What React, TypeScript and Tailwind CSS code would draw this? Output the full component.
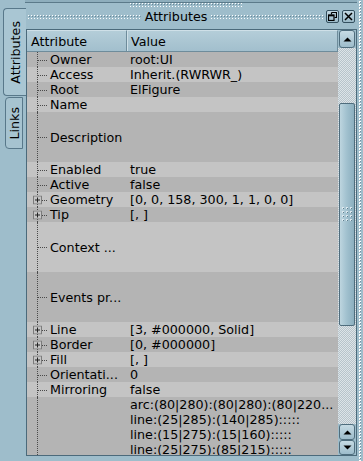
import React from 'react';

type Row = { label: string; value?: string; tall?: boolean; expand?: boolean };

const rows: Row[] = [
  { label: 'Owner', value: 'root:UI' },
  { label: 'Access', value: 'Inherit.(RWRWR_)' },
  { label: 'Root', value: 'ElFigure' },
  { label: 'Name' },
  { label: 'Description', tall: true },
  { label: 'Enabled', value: 'true' },
  { label: 'Active', value: 'false' },
  { label: 'Geometry', value: '[0, 0, 158, 300, 1, 1, 0, 0]', expand: true },
  { label: 'Tip', value: '[, ]', expand: true },
  { label: 'Context ...', tall: true },
  { label: 'Events pr...', tall: true },
  { label: 'Line', value: '[3, #000000, Solid]', expand: true },
  { label: 'Border', value: '[0, #000000]', expand: true },
  { label: 'Fill', value: '[, ]', expand: true },
  { label: 'Orientati...', value: '0' },
  { label: 'Mirroring', value: 'false' },
];

const shapes = [
  'arc:(80|280):(80|280):(80|220...',
  'line:(25|285):(140|285):::::',
  'line:(15|275):(15|160):::::',
  'line:(25|275):(85|215):::::',
];

const Grip = ({ id, className }: { id: string; className: string }) => (
  <div className={className}>
    <svg className="block w-full h-full">
      <defs>
        <pattern id={id} width="3" height="3" patternUnits="userSpaceOnUse">
          <rect x="0" y="0" width="1" height="1" fill="#ffffff" />
          <rect x="1" y="1" width="1" height="1" fill="#6a8898" />
        </pattern>
      </defs>
      <rect width="100%" height="100%" fill={`url(#${id})`} />
    </svg>
  </div>
);

const ExpandBox = () => (
  <svg width="9" height="9" className="absolute left-[6px] top-1/2 -translate-y-1/2">
    <rect x="0.5" y="0.5" width="8" height="8" fill="#c4c4c4" stroke="#7b7b7b" />
    <path d="M2 4.5h5M4.5 2v5" stroke="#222" />
  </svg>
);

const Arrow = ({ down }: { down?: boolean }) => (
  <svg width="9" height="5">
    <path d={down ? 'M0.5 0.5h8l-4 4z' : 'M0.5 4.5h8l-4-4z'} fill="#000" />
  </svg>
);

const ScrollBtn = ({ down, h }: { down?: boolean; h: string }) => (
  <div
    className={`${h} mx-[1px] rounded-[3px] border border-[#4f6d7d] bg-gradient-to-b from-[#c6dbe4] to-[#9dbccb] flex items-center justify-center`}
  >
    <Arrow down={down} />
  </div>
);

const TreeRow = ({ row, dark }: { row: Row; dark: boolean }) => (
  <div className={`flex ${row.tall ? 'h-[50px]' : 'h-[15px]'} ${dark ? 'bg-[#b4b4b4]' : 'bg-[#c4c4c4]'}`}>
    <div className="relative w-[100px] flex items-center pl-[23px] whitespace-nowrap">
      <span className="absolute left-[10px] top-0 bottom-0 border-l border-dotted border-[#4a4a4a]" />
      <span className="absolute left-[11px] w-[9px] top-1/2 border-t border-dotted border-[#4a4a4a]" />
      {row.expand && <ExpandBox />}
      {row.label}
    </div>
    <div className="flex-1 flex items-center pl-[3px] whitespace-nowrap overflow-hidden">{row.value}</div>
  </div>
);

export default function App() {
  return (
    <div className="w-[363px] h-[461px] bg-[#9ebdcb] flex overflow-hidden text-[12.7px] leading-[15px] text-black font-['DejaVu_Sans',sans-serif]">
      <div className="w-[357px] flex flex-col">
        <div className="h-[3px] ml-[25px] bg-[#8eaebd] border-b border-[#5b7a8a]" />
        <div className="h-[5px] flex justify-center pl-[14px]">
          <Grip id="g-top" className="w-[112px] h-[4px]" />
        </div>
        <div className="flex flex-1 min-h-0">
          <div className="w-[26px] flex flex-col items-end">
            <div className="w-[23px] h-[88px] bg-[#a9c6d3] border border-r-0 border-[#58788a] rounded-l-[4px] flex items-center justify-center">
              <span className="[writing-mode:vertical-rl] rotate-180">Attributes</span>
            </div>
            <div className="mr-[3px] mt-[1px] w-[18px] h-[52px] bg-[#a6c3d0] border border-[#58788a] rounded-l-[4px] flex items-center justify-center">
              <span className="[writing-mode:vertical-rl] rotate-180">Links</span>
            </div>
          </div>

          <div className="flex-1 min-w-0 flex flex-col pb-[5px]">
            <div className="h-[21px] flex items-center pl-[2px] pr-[2px] pb-[4px]">
              <Grip id="g-l" className="flex-1 min-w-0 h-[4px]" />
              <span className="mx-[4px]">Attributes</span>
              <Grip id="g-r" className="flex-1 min-w-0 h-[4px]" />
              <div className="ml-[2px] w-[13px] h-[13px] rounded-[2px] border border-[#34505f] bg-gradient-to-b from-[#c2d8e2] to-[#9ab9c8] flex items-center justify-center">
                <svg width="9" height="9">
                  <path d="M3.5 0.5h5v5h-2M3.5 0.5v2" stroke="#000" fill="none" strokeWidth="1.2" />
                  <rect x="0.5" y="3" width="5.5" height="5.5" stroke="#000" fill="none" strokeWidth="1.2" />
                  <path d="M0.5 3.6h5.5" stroke="#000" strokeWidth="1.5" />
                </svg>
              </div>
              <div className="ml-[3px] w-[13px] h-[13px] rounded-[2px] border border-[#34505f] bg-gradient-to-b from-[#c2d8e2] to-[#9ab9c8] flex items-center justify-center">
                <svg width="9" height="9">
                  <path d="M1 1l7 7M8 1l-7 7" stroke="#000" strokeWidth="1.5" />
                </svg>
              </div>
            </div>

            <div className="flex-1 min-h-0 flex border border-[#4b6a7b]">
              <div className="flex-1 flex flex-col min-w-0">
                <div className="h-[22px] shrink-0 flex bg-gradient-to-b from-[#b5ced9] to-[#a2bfcd] border-b border-[#6e8c9b]">
                  <div className="w-[100px] pl-[4px] flex items-center border-r border-[#6e8c9b] border-t border-t-[#cfe0e8]">
                    Attribute
                  </div>
                  <div className="flex-1 pl-[3px] flex items-center border-t border-t-[#cfe0e8] border-l border-l-[#cfe0e8] border-r border-r-[#6e8c9b]">
                    Value
                  </div>
                </div>
                <div className="flex-1 min-h-0 overflow-hidden">
                  {rows.map((r, i) => (
                    <TreeRow key={r.label} row={r} dark={i % 2 === 0} />
                  ))}
                  <div className="flex h-[80px] bg-[#b4b4b4]">
                    <div className="relative w-[100px]">
                      <span className="absolute left-[10px] top-0 bottom-0 border-l border-dotted border-[#4a4a4a]" />
                    </div>
                    <div className="flex-1 pl-[3px] whitespace-nowrap overflow-hidden">
                      {shapes.map((s) => (
                        <div key={s}>{s}</div>
                      ))}
                    </div>
                  </div>
                </div>
              </div>

              <div className="w-[18px] flex flex-col">
                <ScrollBtn h="h-[18px]" />
                <div className="flex-1 flex flex-col bg-[image:repeating-conic-gradient(#b7c4cb_0%_25%,#dde4e8_0%_50%)] bg-[length:2px_2px]">
                  <div className="h-[55px]" />
                  <div className="h-[223px] mx-[1px] rounded-[2px] border border-[#4f6d7d] bg-gradient-to-r from-[#bdd5df] via-[#a0c0ce] to-[#8cafbf] flex items-center justify-center">
                    <svg width="11" height="15">
                      {[0, 1, 2, 3].map((r) =>
                        [0, 1, 2].map((c) => (
                          <g key={`${r}-${c}`}>
                            <rect x={c * 4} y={r * 4} width="2" height="2" fill="#dbe8ee" />
                            <rect x={c * 4 + 1} y={r * 4 + 1} width="1" height="1" fill="#60808f" />
                          </g>
                        ))
                      )}
                    </svg>
                  </div>
                  <div className="flex-1" />
                </div>
                <ScrollBtn h="h-[16px]" />
                <ScrollBtn down h="h-[15px]" />
              </div>
            </div>
          </div>
        </div>
      </div>
      <div className="w-[6px] flex justify-center pt-[1px]">
        <svg className="w-[3px] h-full">
          <defs>
            <pattern id="g-side" width="3" height="3" patternUnits="userSpaceOnUse">
              <rect x="0" y="0" width="2" height="2" fill="#ffffff" />
              <rect x="1" y="1" width="1" height="1" fill="#7090a0" />
            </pattern>
          </defs>
          <rect width="100%" height="100%" fill="url(#g-side)" />
        </svg>
      </div>
    </div>
  );
}
